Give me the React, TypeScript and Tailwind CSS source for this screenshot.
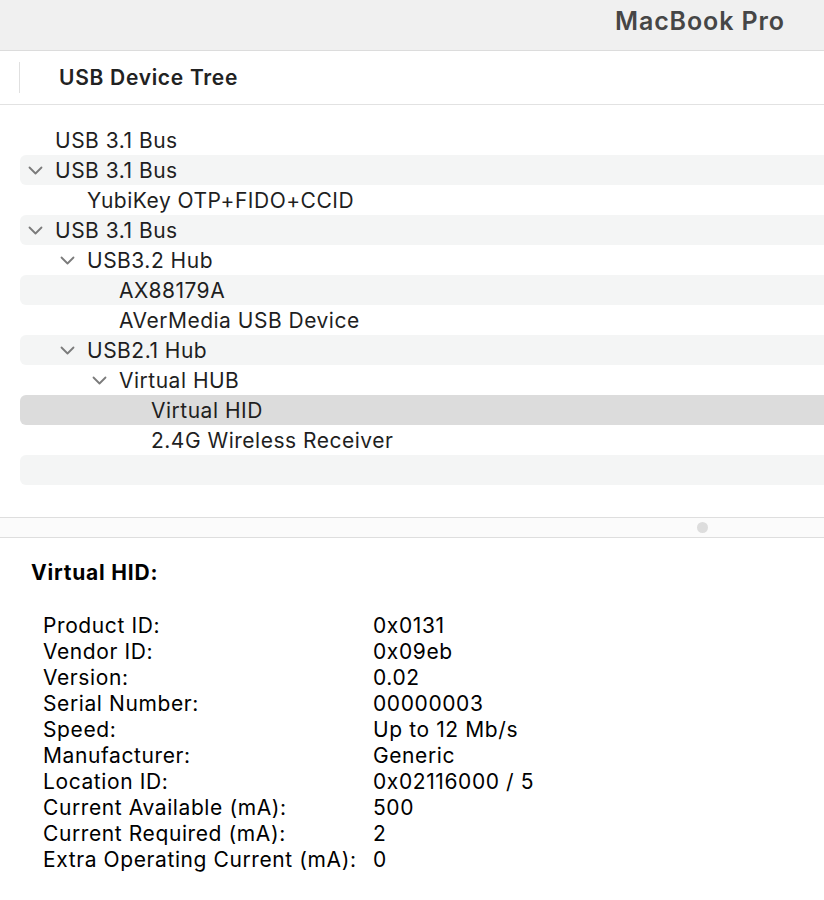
const font = { fontFamily: "Inter, 'Noto Sans', sans-serif" };

type Node = { label: string; level: number; open?: boolean };

const tree: Node[] = [
  { label: "USB 3.1 Bus", level: 0 },
  { label: "USB 3.1 Bus", level: 0, open: true },
  { label: "YubiKey OTP+FIDO+CCID", level: 1 },
  { label: "USB 3.1 Bus", level: 0, open: true },
  { label: "USB3.2 Hub", level: 1, open: true },
  { label: "AX88179A", level: 2 },
  { label: "AVerMedia USB Device", level: 2 },
  { label: "USB2.1 Hub", level: 1, open: true },
  { label: "Virtual HUB", level: 2, open: true },
  { label: "Virtual HID", level: 3 },
  { label: "2.4G Wireless Receiver", level: 3 },
  { label: "", level: 0 },
  { label: "", level: 0 },
];

const indent = ["pl-[8px]", "pl-[40px]", "pl-[72px]", "pl-[104px]"];

const details: [string, string][] = [
  ["Product ID:", "0x0131"],
  ["Vendor ID:", "0x09eb"],
  ["Version:", "0.02"],
  ["Serial Number:", "00000003"],
  ["Speed:", "Up to 12 Mb/s"],
  ["Manufacturer:", "Generic"],
  ["Location ID:", "0x02116000 / 5"],
  ["Current Available (mA):", "500"],
  ["Current Required (mA):", "2"],
  ["Extra Operating Current (mA):", "0"],
];

function Chevron() {
  return (
    <svg width="15" height="9" viewBox="0 0 15 9" className="shrink-0">
      <path d="M1.5 1.5 L7.5 7.5 L13.5 1.5" fill="none" stroke="#7b7b7b" strokeWidth="1.8" strokeLinecap="round" strokeLinejoin="round" />
    </svg>
  );
}

export default function App() {
  return (
    <div className="w-[824px] h-[900px] overflow-hidden bg-white text-[#1f1f1f]" style={font}>
      <div className="h-[51px] bg-[#f0f0f0] border-b border-[#dcdcdc] flex items-center justify-end pr-[39px] pb-[6px]">
        <span className="text-[25px] font-semibold text-[#464646] tracking-[0.9px]">MacBook Pro</span>
      </div>

      <div className="h-[54px] border-b border-[#e2e2e2] flex items-center">
        <div className="ml-[19px] w-px h-[31px] bg-[#e0e0e0]" />
        <span className="ml-[39px] text-[21px] font-semibold text-[#222] tracking-[0.7px]">USB Device Tree</span>
      </div>

      <div className="pt-[20px] pl-[20px] h-[412px]">
        {tree.map((n, i) => {
          const sel = n.label === "Virtual HID";
          const bg = sel ? "bg-[#dcdcdc]" : i % 2 === 1 ? "bg-[#f4f5f5]" : "bg-white";
          return (
            <div key={i} className={`h-[30px] rounded-l-[6px] flex items-center ${bg} ${indent[n.level]}`}>
              <div className="w-[15px] flex justify-center">{n.open && <Chevron />}</div>
              <span className="ml-[12px] text-[21px] leading-none tracking-[0.5px]">{n.label}</span>
            </div>
          );
        })}
      </div>

      <div className="h-[21px] border-y border-[#dedede] bg-[#fbfbfb] flex items-center">
        <div className="ml-[697px] w-[11px] h-[11px] rounded-full bg-[#dddddd]" />
      </div>

      <div className="pl-[31px] pt-[22px]">
        <div className="text-[21px] leading-[26px] font-bold text-black tracking-[0.8px]">Virtual HID:</div>
        <div className="mt-[27px] ml-[12px] grid grid-cols-[330px_1fr] text-[21px] leading-[26px] tracking-[0.6px] text-black">
          {details.map(([k, v]) => (
            <div key={k} className="contents">
              <span>{k}</span>
              <span>{v}</span>
            </div>
          ))}
        </div>
      </div>
    </div>
  );
}
